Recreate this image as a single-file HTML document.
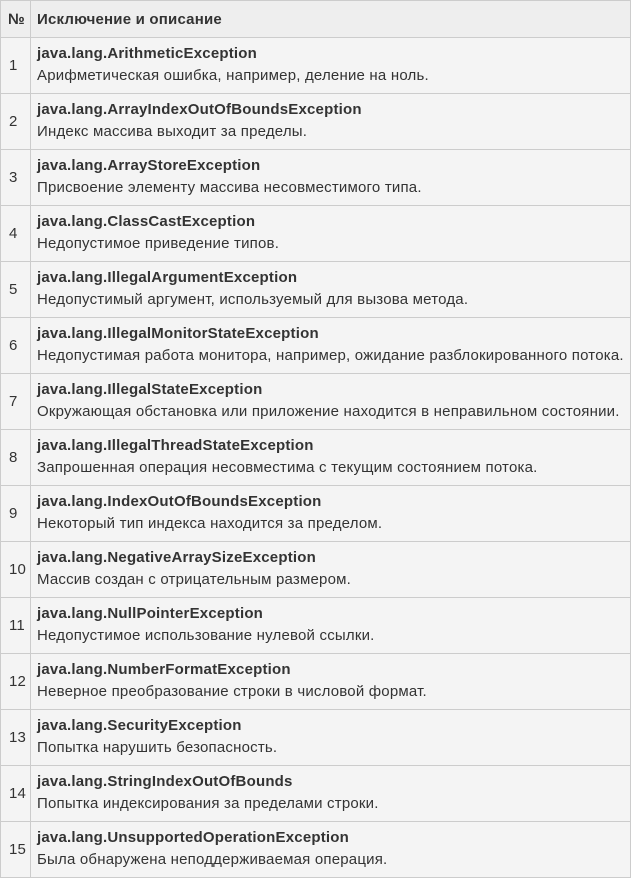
<!DOCTYPE html>
<html><head><meta charset="utf-8"><style>
body{margin:0;background:#fff;font-family:"Liberation Sans",Arial,sans-serif;color:#333;font-size:15px;letter-spacing:0.2px}
table{position:absolute;left:0;top:0;width:631px;border-collapse:collapse;background:#f4f4f4;table-layout:fixed}
td,th{border:1px solid #ccc;padding:0 6px;text-align:left;vertical-align:middle;white-space:nowrap;overflow:visible}
th{background:#eee;height:36px;font-weight:bold;font-size:15px}
td{height:53px;line-height:22px;padding-bottom:2px}
td:first-child,th:first-child{width:22px;padding:0 0 0 7px}
td:first-child{padding-left:8px}
b{color:#333}
</style></head><body>
<table>
<tr><th>№</th><th>Исключение и описание</th></tr>
<tr><td>1</td><td><b>java.lang.ArithmeticException</b><br>Арифметическая ошибка, например, деление на ноль.</td></tr>
<tr><td>2</td><td><b>java.lang.ArrayIndexOutOfBoundsException</b><br>Индекс массива выходит за пределы.</td></tr>
<tr><td>3</td><td><b>java.lang.ArrayStoreException</b><br>Присвоение элементу массива несовместимого типа.</td></tr>
<tr><td>4</td><td><b>java.lang.ClassCastException</b><br>Недопустимое приведение типов.</td></tr>
<tr><td>5</td><td><b>java.lang.IllegalArgumentException</b><br>Недопустимый аргумент, используемый для вызова метода.</td></tr>
<tr><td>6</td><td><b>java.lang.IllegalMonitorStateException</b><br>Недопустимая работа монитора, например, ожидание разблокированного потока.</td></tr>
<tr><td>7</td><td><b>java.lang.IllegalStateException</b><br>Окружающая обстановка или приложение находится в неправильном состоянии.</td></tr>
<tr><td>8</td><td><b>java.lang.IllegalThreadStateException</b><br>Запрошенная операция несовместима с текущим состоянием потока.</td></tr>
<tr><td>9</td><td><b>java.lang.IndexOutOfBoundsException</b><br>Некоторый тип индекса находится за пределом.</td></tr>
<tr><td>10</td><td><b>java.lang.NegativeArraySizeException</b><br>Массив создан с отрицательным размером.</td></tr>
<tr><td>11</td><td><b>java.lang.NullPointerException</b><br>Недопустимое использование нулевой ссылки.</td></tr>
<tr><td>12</td><td><b>java.lang.NumberFormatException</b><br>Неверное преобразование строки в числовой формат.</td></tr>
<tr><td>13</td><td><b>java.lang.SecurityException</b><br>Попытка нарушить безопасность.</td></tr>
<tr><td>14</td><td><b>java.lang.StringIndexOutOfBounds</b><br>Попытка индексирования за пределами строки.</td></tr>
<tr><td>15</td><td><b>java.lang.UnsupportedOperationException</b><br>Была обнаружена неподдерживаемая операция.</td></tr>
</table>
</body></html>
